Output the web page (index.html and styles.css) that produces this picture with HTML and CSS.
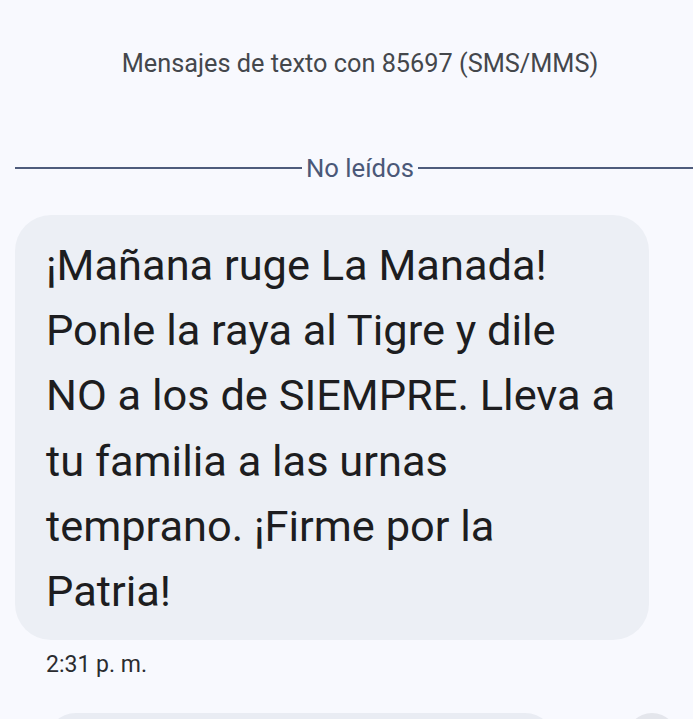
FILE: index.html
```html
<!DOCTYPE html>
<html lang="es">
<head>
<meta charset="utf-8">
<title>Mensajes</title>
<link rel="stylesheet" href="styles.css">
</head>
<body>
<div class="thread">
  <header class="title">Mensajes de texto con 85697 (SMS/MMS)</header>
  <div class="unread"><span class="rule rule-left"></span><span class="unread-label">No leídos</span><span class="rule rule-right"></span></div>
  <div class="bubble">
    <p class="msg">¡Mañana ruge La Manada!<br>Ponle la raya al Tigre y dile<br>NO a los de SIEMPRE. Lleva a<br>tu familia a las urnas<br>temprano. ¡Firme por la<br>Patria!</p>
  </div>
  <div class="time">2:31 p. m.</div>
  <div class="next">
    <div class="next-bubble"></div>
    <div class="next-circle"></div>
  </div>
</div>
</body>
</html>
```
FILE: styles.css
```css
html, body {
  margin: 0;
  padding: 0;
  background: #f8f9fe;
  overflow: hidden;
}
.thread {
  font-family: Roboto, "Noto Sans", sans-serif;
  display: flex;
  flex-direction: column;
}
.title {
  padding: 48px 0 0 27px;
  text-align: center;
  font-size: 25.3px;
  line-height: 32px;
  color: #44474c;
}
.unread {
  display: flex;
  align-items: center;
  margin-top: 73px;
  padding-left: 15px;
  height: 30px;
}
.rule {
  height: 2px;
  background: #4f5c7c;
}
.rule-left {
  flex: 287;
}
.rule-right {
  flex: 275;
}
.unread-label {
  padding: 0 4px;
  font-size: 25.7px;
  line-height: 30px;
  color: #4b5878;
}
.bubble {
  margin: 32px 44px 0 15px;
  padding: 18px 20px 16px 31px;
  background: #eceff5;
  border-radius: 36px;
}
.msg {
  margin: 0;
  font-size: 43.4px;
  line-height: 65.2px;
  color: #1d1d20;
}
.time {
  margin: 10px 0 0 46px;
  font-size: 23px;
  line-height: 30px;
  color: #2b2c30;
}
.next {
  display: flex;
  gap: 71px;
  margin: 33px 0 0 46px;
}
.next-bubble {
  width: 509px;
  height: 60px;
  background: #e9ecf3;
  border-radius: 30px;
}
.next-circle {
  width: 52px;
  height: 52px;
  background: #e4e6ec;
  border-radius: 50%;
}
```
